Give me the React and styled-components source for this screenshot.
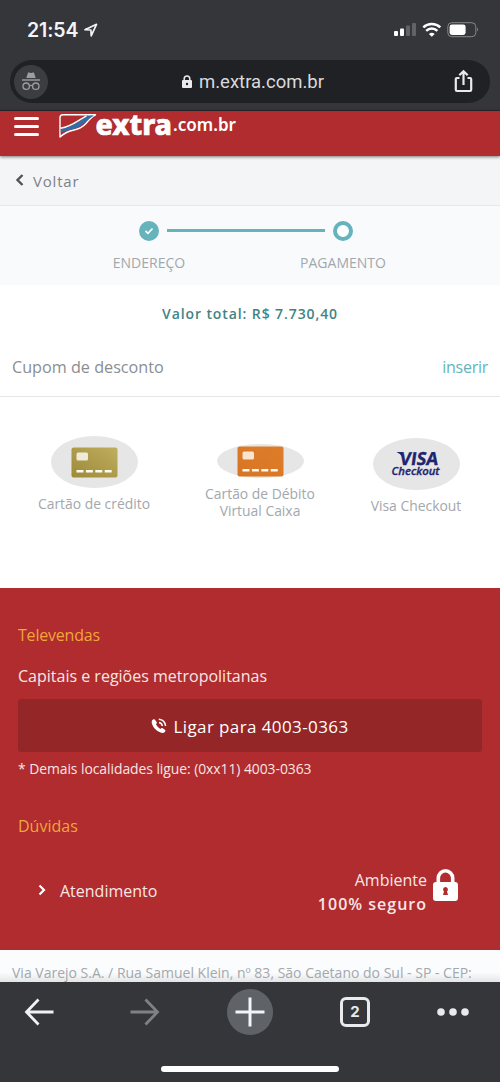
import styled, { createGlobalStyle } from "styled-components";

const colors = {
  chrome: "#35363a",
  pill: "#202124",
  red: "#b02c2e",
  darkRed: "#942627",
  teal: "#66b3bc",
  tealDark: "#3f8485",
  grey: "#a3a8ac",
  white: "#ffffff",
};

const GlobalStyle = createGlobalStyle`
  * {
    box-sizing: border-box;
  }
  body {
    margin: 0;
    background: ${colors.white};
    font-family: "Open Sans", "Noto Sans", sans-serif;
  }
  svg {
    display: block;
    flex-shrink: 0;
    overflow: visible;
  }
  button {
    border: none;
    background: none;
    padding: 0;
    font: inherit;
    color: inherit;
  }
`;

const Page = styled.div`
  width: 500px;
  height: 1082px;
  display: flex;
  flex-direction: column;
  overflow: hidden;
`;

const Text = styled.span`
  font-size: ${(p) => p.$size || 16}px;
  letter-spacing: ${(p) => p.$spacing || 0}px;
  font-weight: ${(p) => p.$weight || 400};
  color: ${(p) => p.$color || "inherit"};
  line-height: ${(p) => p.$line || 24}px;
  white-space: nowrap;
`;

/* browser top */

const BrowserTop = styled.div`
  height: 111px;
  flex-shrink: 0;
  background: ${colors.chrome};
  border-bottom: 1px solid #2a2526;
`;

const StatusBar = styled.div`
  height: 60px;
  padding: 0 21px 0 27px;
  display: flex;
  align-items: center;
  justify-content: space-between;
`;

const Clock = styled.div`
  display: flex;
  align-items: center;
  gap: 6px;
  color: #f4f4f5;
  font-family: Inter, sans-serif;
`;

const AddressBar = styled.div`
  height: 43px;
  margin: 0 10px;
  padding: 0 17px 0 4px;
  border-radius: 22px;
  background: ${colors.pill};
  display: flex;
  align-items: center;
  justify-content: space-between;
`;

const Incognito = styled.div`
  width: 34px;
  height: 34px;
  border-radius: 50%;
  background: #3c3d41;
  display: flex;
  align-items: center;
  justify-content: center;
`;

const Url = styled.div`
  display: flex;
  align-items: center;
  gap: 7px;
  margin-left: 4px;
  color: #d9dadd;
  font-family: Roboto, sans-serif;
`;

/* shop header */

const Header = styled.header`
  height: 45px;
  flex-shrink: 0;
  padding: 0 14px;
  display: flex;
  align-items: flex-start;
  background: ${colors.red};
  box-shadow: 0 1px 3px rgba(0, 0, 0, 0.5);
  z-index: 1;
`;

const Burger = styled.button`
  width: 25px;
  margin-top: 6px;
  display: grid;
  gap: 4.5px;
`;

const BurgerLine = styled.span`
  height: 3.3px;
  border-radius: 2px;
  background: ${colors.white};
`;

const Logo = styled.svg`
  margin-left: 19px;
`;

const BackRow = styled.div`
  height: 50px;
  flex-shrink: 0;
  padding-left: 15px;
  display: flex;
  align-items: center;
  gap: 9px;
  background: #f4f5f7;
  border-bottom: 1px solid #e6e8ea;
  color: #7f8286;
`;

/* checkout */

const Stepper = styled.div`
  height: 79px;
  flex-shrink: 0;
  padding: 15px 60px 0 52px;
  display: grid;
  grid-template-columns: 194px 194px;
  background: #f8fafc;
`;

const Step = styled.div`
  position: relative;
  display: flex;
  flex-direction: column;
  align-items: center;
  gap: 10px;
`;

const Dot = styled.div`
  width: 20px;
  height: 20px;
  border-radius: 50%;
  border: 4px solid ${colors.teal};
  background: ${(p) => (p.$done ? colors.teal : colors.white)};
  display: flex;
  align-items: center;
  justify-content: center;
`;

const StepLine = styled.div`
  position: absolute;
  top: 8px;
  left: 115px;
  width: 158px;
  height: 3px;
  background: ${colors.teal};
`;

const Total = styled.div`
  height: 58px;
  flex-shrink: 0;
  display: flex;
  align-items: center;
  justify-content: center;
`;

const Coupon = styled.div`
  height: 54px;
  flex-shrink: 0;
  padding: 0 12px 5px;
  display: flex;
  align-items: center;
  justify-content: space-between;
  border-bottom: 1px solid #e5e7e8;
  color: #8b8e91;
`;

const Methods = styled.div`
  height: 191px;
  flex-shrink: 0;
  padding: 0 4px 0 14px;
  display: grid;
  grid-template-columns: 160px 172px 140px;
`;

const Method = styled.div`
  padding-top: ${(p) => p.$top}px;
  display: flex;
  flex-direction: column;
  align-items: center;
  text-align: center;
`;

const Oval = styled.div`
  width: 87px;
  height: ${(p) => p.$height || 52}px;
  margin-bottom: 7px;
  border-radius: 50%;
  background: #e6e6e6;
  display: flex;
  align-items: center;
  justify-content: center;
`;

/* footer */

const Footer = styled.footer`
  height: 362px;
  flex-shrink: 0;
  padding: 35px 18px 0;
  background: ${colors.red};
  color: #f8e6e6;
  display: flex;
  flex-direction: column;
`;

const SectionTitle = styled(Text)`
  margin-top: ${(p) => p.$top || 0}px;
  color: #efa63b;
`;

const Region = styled(Text)`
  margin-top: 17px;
`;

const CallButton = styled.button`
  height: 53px;
  flex-shrink: 0;
  margin: 11px 0 5px;
  border-radius: 3px;
  background: ${colors.darkRed};
  display: flex;
  align-items: center;
  justify-content: center;
  gap: 6px;
  padding-top: 2px;
`;

const HelpRow = styled.div`
  margin-top: 30px;
  padding: 0 24px 0 20px;
  display: flex;
  align-items: flex-start;
  justify-content: space-between;
`;

const HelpLink = styled.div`
  display: flex;
  align-items: center;
  gap: 14px;
  padding-top: 11px;
`;

const Secure = styled.div`
  display: flex;
  gap: 6px;
`;

const SecureText = styled.div`
  display: flex;
  flex-direction: column;
  align-items: flex-end;
`;

const LockIcon = styled.svg`
  margin-top: 1px;
`;

const Address = styled.div`
  height: 32px;
  flex-shrink: 0;
  padding: 11px 12px 0;
  background: linear-gradient(#fafcfd 0 70%, #e3e5e7);
`;

const BottomBar = styled.nav`
  height: 100px;
  flex-shrink: 0;
  background: ${colors.chrome};
  display: flex;
  flex-direction: column;
  align-items: center;
`;

const Tools = styled.div`
  width: 100%;
  height: 60px;
  padding-left: 23px;
  display: flex;
  align-items: center;
  gap: 67px;
`;

const ForwardIcon = styled.svg`
  margin: 0 -1px 0 7px;
`;

const NewTab = styled.button`
  width: 46px;
  height: 46px;
  border-radius: 50%;
  background: #5f6267;
  display: flex;
  align-items: center;
  justify-content: center;
`;

const TabCount = styled.div`
  width: 30px;
  height: 30px;
  border: 3px solid #e9eaee;
  border-radius: 6px;
  display: flex;
  align-items: center;
  justify-content: center;
  color: #e9eaee;
  font-family: Inter, sans-serif;
`;

const HomeIndicator = styled.div`
  width: 178px;
  height: 6px;
  margin-top: 24px;
  border-radius: 3px;
  background: ${colors.white};
`;

const SignalIcons = () => (
  <svg width="86" height="18" viewBox="0 0 86 18">
    <rect x="1" y="10" width="4" height="5" rx="1" fill="#fff" />
    <rect x="7" y="7.5" width="4" height="7.5" rx="1" fill="#fff" />
    <rect x="13" y="4.5" width="4" height="10.5" rx="1" fill="#626367" />
    <rect x="19" y="2" width="4" height="13" rx="1" fill="#626367" />
    <g fill="none" stroke="#fff" strokeWidth="2.4">
      <path d="M30.3 6.4a12.3 12.3 0 0 1 17 0" />
      <path d="M33.2 9.8a8 8 0 0 1 11.2 0" />
    </g>
    <path d="M35.9 13q2.9-2.4 5.8 0l-2.9 2.8z" fill="#fff" />
    <rect x="54.8" y="1.7" width="28" height="14" rx="4" fill="none" stroke="#87888b" />
    <rect x="56.6" y="3.4" width="16" height="10.6" rx="2.4" fill="#fff" />
    <path d="M84.2 6.5q2 2 0 4z" fill="#87888b" />
  </svg>
);

const IncognitoIcon = () => (
  <svg width="18" height="19" viewBox="0 0 18 19" fill="#9c9da1">
    <path d="M4.3 6 5.9.9q.3-.7 1-.5l2.1.5 2.1-.5q.7-.2 1 .5L13.7 6z" />
    <rect x="0" y="7.3" width="18" height="1.4" />
    <g fill="none" stroke="#9c9da1" strokeWidth="1.3">
      <circle cx="4.2" cy="14.2" r="3.2" />
      <circle cx="13.8" cy="14.2" r="3.2" />
      <path d="M7.4 13.8q1.6-1 3.2 0" />
    </g>
  </svg>
);

const ExtraLogo = () => (
  <Logo width="180" height="30" viewBox="0 0 180 30">
    <path
      d="M2 26V6.500Q2 3.800 4.800 3.800H37.500Q33 6 28 12.500Q23.500 17.500 16 19Q8 20.500 2 26z"
      fill={colors.red}
      stroke="#fff"
      strokeWidth="1.400"
      strokeLinejoin="round"
    />
    <path d="M2.700 21.800V17.800C16 15.500 19 11 29 5.200L36 4.600C27 10 24 16 15.500 18Q8 19.500 2.700 21.800z" fill="#2f6fa8" />
    <path d="M2.500 17.300C15 15 18 10.500 28.500 4.800" fill="none" stroke="#fff" strokeWidth="1.400" />
    <text
      x="37.500"
      y="23.500"
      fontFamily="Noto Sans"
      fontWeight="800"
      fontSize="28.500"
      textLength="76.500"
      lengthAdjust="spacingAndGlyphs"
      fill="#fff"
      stroke="#fff"
      strokeWidth="0.700"
    >
      extra
    </text>
    <text
      x="115"
      y="19.500"
      fontFamily="Noto Sans"
      fontWeight="600"
      fontSize="18"
      textLength="63"
      lengthAdjust="spacingAndGlyphs"
      fill="#fff"
    >
      .com.br
    </text>
  </Logo>
);

// eslint-disable-next-line react/prop-types
const CardIcon = ({ from, to }) => (
  <svg width="47" height="31" viewBox="0 0 47 31">
    <defs>
      <linearGradient id={from.slice(1)} x1="0" y1="1" x2="1" y2="0">
        <stop offset="0" stopColor={from} />
        <stop offset="1" stopColor={to} />
      </linearGradient>
    </defs>
    <rect x="0.500" y="0.500" width="46" height="30" rx="2" fill={`url(${from})`} />
    <rect x="5.500" y="5.500" width="11.500" height="8" rx="1.500" fill="#fff" opacity="0.8" />
    <path d="M5.500 24.300H41" stroke="#fff" strokeWidth="2.400" strokeDasharray="7 2.400" opacity="0.95" />
  </svg>
);

const VisaLogo = () => (
  <svg width="52" height="28" viewBox="0 0 52 28" fill="#1d2471" fontFamily="Open Sans">
    <path d="M6.500 2H12.500L13.500 8Q10.500 3.500 6.500 2z" />
    <g transform="skewX(-8)">
      <text
        x="11"
        y="15"
        fontWeight="700"
        fontSize="18"
        textLength="38.500"
        lengthAdjust="spacingAndGlyphs"
        stroke="#1d2471"
        strokeWidth="0.400"
      >
        VISA
      </text>
    </g>
    <text
      x="1.500"
      y="25.300"
      fontWeight="600"
      fontStyle="italic"
      fontSize="10.300"
      textLength="48"
      lengthAdjust="spacingAndGlyphs"
      stroke="#1d2471"
      strokeWidth="0.300"
    >
      Checkout
    </text>
  </svg>
);

const App = () => {
  return (
    <Page>
      <GlobalStyle />
      <BrowserTop>
        <StatusBar>
          <Clock>
            <Text $size={19.5} $weight={600} $spacing={-0.1}>
              21:54
            </Text>
            <svg width="14" height="14" viewBox="0 0 14 14">
              <path
                d="M1 6.700 12.500 1.300 7.200 12.800 6.900 7z"
                fill="none"
                stroke="#f4f4f5"
                strokeWidth="1.700"
                strokeLinejoin="round"
              />
            </svg>
          </Clock>
          <SignalIcons />
        </StatusBar>
        <AddressBar>
          <Incognito>
            <IncognitoIcon />
          </Incognito>
          <Url>
            <svg width="10" height="14" viewBox="0 0 10 14">
              <path d="M2.200 6V3.800a2.800 2.800 0 0 1 5.600 0V6" fill="none" stroke="#e8eaed" strokeWidth="1.500" />
              <rect x="0" y="5" width="10" height="8" rx="1" fill="#e8eaed" />
              <circle cx="5" cy="9" r="1.200" fill={colors.pill} />
            </svg>
            <Text $size={18.5}>m.extra.com.br</Text>
          </Url>
          <svg width="19" height="24" viewBox="0 0 19 24" fill="none" stroke="#e8eaed" strokeWidth="2.200">
            <path d="M5.500 8H3Q1.800 8 1.800 9.200V19.800Q1.800 21 3 21H16Q17.200 21 17.200 19.800V9.200Q17.200 8 16 8H13.500" />
            <path d="M9.500 15V1.500M5.300 5.300 9.500 1.200 13.700 5.300" />
          </svg>
        </AddressBar>
      </BrowserTop>

      <Header>
        <Burger>
          <BurgerLine />
          <BurgerLine />
          <BurgerLine />
        </Burger>
        <ExtraLogo />
      </Header>
      <BackRow>
        <svg width="9" height="14" viewBox="0 0 9 14">
          <path d="M7.500 1 2.500 6 7.500 11" fill="none" stroke="#515357" strokeWidth="2.400" />
        </svg>
        <Text $size={15} $spacing={0.8}>
          Voltar
        </Text>
      </BackRow>

      <Stepper>
        <Step>
          <Dot $done>
            <svg width="10" height="8" viewBox="0 0 10 8">
              <path d="M1.500 4 4 6.300 8.500 1.500" fill="none" stroke="#fff" strokeWidth="1.700" />
            </svg>
          </Dot>
          <StepLine />
          <Text $size={14} $color={colors.grey}>
            ENDEREÇO
          </Text>
        </Step>
        <Step>
          <Dot />
          <Text $size={14} $color={colors.grey}>
            PAGAMENTO
          </Text>
        </Step>
      </Stepper>
      <Total>
        <Text $size={14} $weight={600} $spacing={0.9} $color={colors.tealDark}>
          Valor total: R$ 7.730,40
        </Text>
      </Total>
      <Coupon>
        <Text $size={16.2}>Cupom de desconto</Text>
        <Text $size={16} $spacing={-0.25} $color={colors.teal}>
          inserir
        </Text>
      </Coupon>
      <Methods>
        <Method $top={39}>
          <Oval>
            <CardIcon from="#9c8a37" to="#c0ae60" />
          </Oval>
          <Text $size={13.9} $line={17} $color={colors.grey}>
            Cartão de crédito
          </Text>
        </Method>
        <Method $top={47}>
          <Oval $height={34}>
            <CardIcon from="#d87522" to="#dd7d2b" />
          </Oval>
          <Text $size={13.9} $line={17} $color={colors.grey}>
            Cartão de Débito
            <br />
            Virtual Caixa
          </Text>
        </Method>
        <Method $top={41}>
          <Oval>
            <VisaLogo />
          </Oval>
          <Text $size={13.9} $line={17} $color={colors.grey}>
            Visa Checkout
          </Text>
        </Method>
      </Methods>

      <Footer>
        <SectionTitle $size={16} $spacing={-0.2}>
          Televendas
        </SectionTitle>
        <Region $size={16}>Capitais e regiões metropolitanas</Region>
        <CallButton>
          <svg width="16" height="18" viewBox="0 0 16 18">
            <path
              d="M1 2.500Q2.500.5 3.800 1.500L5.800 4.200Q6.200 5 4.900 6.300 6.500 9.400 9.400 10.900 10.500 9.700 11.300 10.100L14.200 12Q15 12.700 13.800 14 12.300 15.600 9.500 14.600 3 12 .9 5.800.4 3.800 1 2.500z"
              fill="#fff"
            />
            <path d="M8 4.500Q11 5 11.300 8M7.800 1.200Q14 1.800 14.600 8" fill="none" stroke="#fff" strokeWidth="1.500" />
          </svg>
          <Text $size={17} $weight={500} $spacing={0.4} $color="#fff">
            Ligar para 4003-0363
          </Text>
        </CallButton>
        <Text $size={13.9} $spacing={-0.05}>
          * Demais localidades ligue: (0xx11) 4003-0363
        </Text>
        <SectionTitle $size={16} $top={33}>
          Dúvidas
        </SectionTitle>
        <HelpRow>
          <HelpLink>
            <svg width="8" height="12" viewBox="0 0 8 12">
              <path d="M1.500 0.500 6 5 1.500 9.500" fill="none" stroke="#fff" strokeWidth="2.200" />
            </svg>
            <Text $size={16}>Atendimento</Text>
          </HelpLink>
          <Secure>
            <SecureText>
              <Text $size={16}>Ambiente</Text>
              <Text $size={16} $weight={600} $spacing={1}>
                100% seguro
              </Text>
            </SecureText>
            <LockIcon width="25" height="33" viewBox="0 0 25 33">
              <path d="M5.300 15V9a7.200 7.200 0 0 1 14.400 0v6" fill="none" stroke="#fff" strokeWidth="3.600" />
              <rect x="0" y="13" width="25" height="19" rx="3" fill="#fff" />
              <path d="M12.500 18a2.600 2.600 0 0 1 1.500 4.600l1 3.400h-5l1-3.400A2.600 2.600 0 0 1 12.500 18z" fill={colors.red} />
            </LockIcon>
          </Secure>
        </HelpRow>
      </Footer>
      <Address>
        <Text $size={14} $color={colors.grey}>
          Via Varejo S.A. / Rua Samuel Klein, nº 83, São Caetano do Sul - SP - CEP:
        </Text>
      </Address>

      <BottomBar>
        <Tools>
          <svg width="32" height="28" viewBox="0 0 32 28" fill="none" stroke="#f0f1f3" strokeWidth="2.800">
            <path d="M30.500 14H3.500M15.500 1.500 3.500 14 15.500 26.500" />
          </svg>
          <ForwardIcon width="32" height="28" viewBox="0 0 32 28" fill="none" stroke="#808184" strokeWidth="2.800">
            <path d="M1.500 14H28.500M16.500 1.500 28.500 14 16.500 26.500" />
          </ForwardIcon>
          <NewTab>
            <svg width="30" height="30" viewBox="0 0 30 30" stroke="#f4f5f6" strokeWidth="3">
              <path d="M15 0.500V29.500M0.500 15H29.500" />
            </svg>
          </NewTab>
          <TabCount>
            <Text $size={15} $weight={700}>
              2
            </Text>
          </TabCount>
          <svg width="32" height="8" viewBox="0 0 32 8" fill="#e9eaee">
            <circle cx="4" cy="4" r="3.800" />
            <circle cx="16" cy="4" r="3.800" />
            <circle cx="28" cy="4" r="3.800" />
          </svg>
        </Tools>
        <HomeIndicator />
      </BottomBar>
    </Page>
  );
};

export default App;
